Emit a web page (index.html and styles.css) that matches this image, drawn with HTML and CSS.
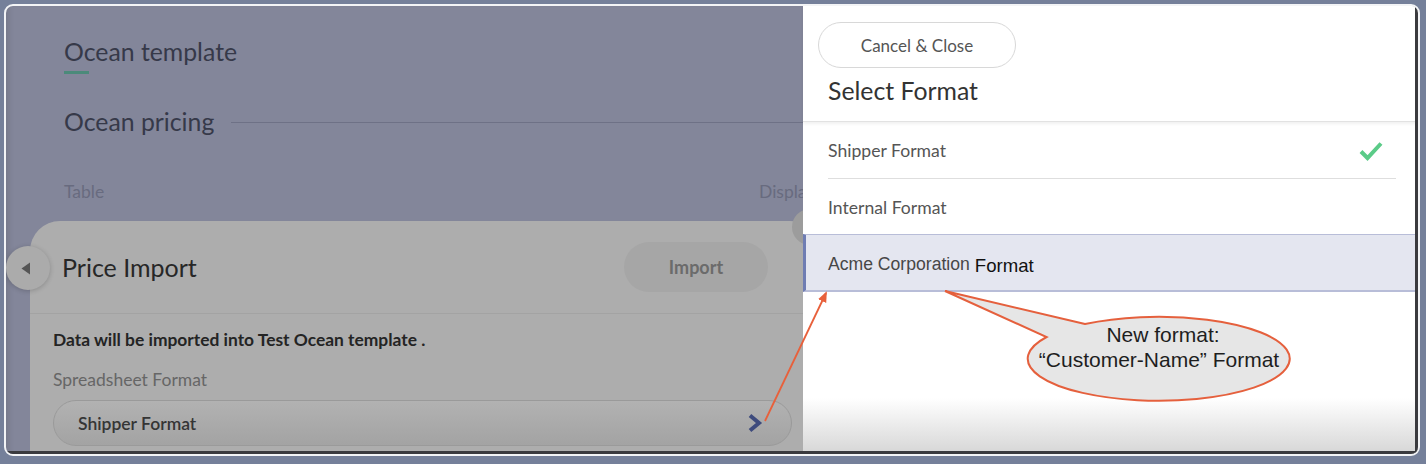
FILE: index.html
```html
<!DOCTYPE html>
<html lang="en">
<head>
    <meta charset="UTF-8">
    <meta name="viewport" content="width=device-width, initial-scale=1.0">
    <title>Price Import - Select Format</title>
    <link rel="stylesheet" href="styles.css">
</head>
<body>
    <div class="frame">
        <div class="screen">
            <section class="page">
                <div class="page-head">
                    <h1 class="template-title">Ocean template</h1>
                    <div class="title-underline"></div>
                    <div class="pricing-row">
                        <h2>Ocean pricing</h2>
                        <span class="rule"></span>
                    </div>
                    <div class="tabs-row">
                        <span>Table</span>
                        <span>Display</span>
                    </div>
                </div>

                <div class="card">
                    <button class="back-btn" aria-label="Back">
                        <svg width="10" height="13" viewBox="0 0 10 13"><path d="M9 0.5 L0.5 6.5 L9 12.5 Z" fill="#555"/></svg>
                    </button>
                    <span class="card-close"></span>
                    <div class="card-head">
                        <h3>Price Import</h3>
                        <button class="import-btn">Import</button>
                    </div>
                    <div class="card-body">
                        <p class="notice">Data will be imported into Test Ocean template .</p>
                        <label class="field-label">Spreadsheet Format</label>
                        <div class="select">
                            <span>Shipper Format</span>
                            <svg width="16" height="20" viewBox="0 0 16 20"><path d="M3 2.5 L12 10 L3 17.5" fill="none" stroke="#3e4b7d" stroke-width="4" stroke-linejoin="miter"/></svg>
                        </div>
                    </div>
                </div>
            </section>

            <aside class="drawer">
                <div class="drawer-head">
                    <button class="cancel-btn">Cancel &amp; Close</button>
                    <h2>Select Format</h2>
                </div>
                <ul class="format-list">
                    <li class="format-item">
                        <span>Shipper Format</span>
                        <svg class="check" width="24" height="20" viewBox="0 0 24 20"><path d="M2 10.5 L8.5 17 L22 2.5" fill="none" stroke="#5bcb88" stroke-width="4"/></svg>
                    </li>
                    <li class="format-item">Internal Format</li>
                    <li class="format-item selected">
                        <span class="acme">Acme Corporation</span><span class="acme-edit">Format</span>
                    </li>
                </ul>
            </aside>

            <svg class="annotation" width="1412" height="448" viewBox="0 0 1412 448">
                <defs>
                    <marker id="arrowhead" markerWidth="12" markerHeight="12" refX="9" refY="6" orient="auto" markerUnits="userSpaceOnUse">
                        <path d="M0 1.5 L11 6 L0 10.5 Z" fill="#e8603b"/>
                    </marker>
                </defs>
                <line x1="759" y1="415" x2="820" y2="287" stroke="#e8603b" stroke-width="1.8" marker-end="url(#arrowhead)"/>
                <path d="M1079 318 L939 285 L1040.6 331 A131 42 0 1 0 1079 318 Z" fill="#e6e6e6" stroke="#e5603d" stroke-width="2"/>
                <text class="callout-text" x="1157" y="336" text-anchor="middle">New format:</text>
                <text class="callout-text" x="1153" y="361" text-anchor="middle">“Customer-Name” Format</text>
            </svg>
        </div>
    </div>
</body>
</html>
```

FILE: styles.css
```css
* {
    box-sizing: border-box;
}
body {
    margin: 0;
    width: 1426px;
    height: 464px;
    overflow: hidden;
    background: #75809a;
    font-family: Lato, 'Open Sans', sans-serif;
}
.frame {
    position: relative;
    margin: 4px 6px 0 4px;
    height: 452px;
    border: 2px solid #f3f4f6;
    border-radius: 9px;
    overflow: hidden;
    background: #fff;
}
.frame::after {
    content: '';
    position: absolute;
    inset: 0;
    border-right: 3px solid #3a3a3e;
    border-bottom: 3px solid #3a3a3e;
    pointer-events: none;
    z-index: 10;
}
.screen {
    position: relative;
    height: 100%;
}

/* dimmed page behind the drawer */
.page {
    height: 100%;
    background: #83869a;
    box-shadow: inset 6px 0 6px -4px rgba(0, 0, 0, 0.12);
}
.page-head {
    padding: 31px 0 0 58px;
}
.template-title,
.pricing-row h2 {
    margin: 0;
    font-size: 24.8px;
    font-weight: 400;
    line-height: 30px;
    color: #363949;
}
.title-underline {
    width: 25px;
    height: 3px;
    margin-top: 4px;
    background: #4b8a7a;
}
.pricing-row {
    display: flex;
    align-items: center;
    margin-top: 33px;
}
.pricing-row .rule {
    flex: 1;
    height: 1px;
    margin-left: 17px;
    background: #6e7186;
}
.tabs-row {
    display: grid;
    grid-template-columns: 695px auto;
    margin-top: 45px;
    font-size: 17.5px;
    line-height: 20px;
    color: #686b7f;
}

.card {
    position: relative;
    width: 790px;
    height: 260px;
    margin: 19px 0 0 24px;
    background: #adadad;
    border-radius: 30px 30px 0 0;
}
.back-btn {
    position: absolute;
    left: -24px;
    top: 25px;
    width: 44px;
    height: 44px;
    padding: 0 4px 0 0;
    border: none;
    border-radius: 50%;
    background: #ababab;
    box-shadow: 0 1px 5px rgba(0, 0, 0, 0.2);
    display: flex;
    align-items: center;
    justify-content: center;
}
.card-close {
    position: absolute;
    left: 762px;
    top: -12px;
    width: 36px;
    height: 36px;
    border-radius: 50%;
    background: #9c9c9c;
}
.card-head {
    display: flex;
    align-items: center;
    justify-content: space-between;
    height: 93px;
    padding: 0 52px 0 32px;
    border-bottom: 1px solid #a3a3a3;
}
.card-head h3 {
    margin: 0;
    font-size: 25px;
    font-weight: 400;
    color: #272727;
}
.import-btn {
    width: 144px;
    height: 50px;
    border: none;
    border-radius: 25px;
    background: #a6a6a6;
    font-family: Lato, 'Open Sans', sans-serif;
    font-size: 18px;
    font-weight: 700;
    color: #6b6b6b;
}
.card-body {
    padding: 16px 28px 0 23px;
}
.notice {
    margin: 0;
    font-size: 17.4px;
    font-weight: 700;
    line-height: 20px;
    color: #242424;
}
.field-label {
    display: block;
    margin-top: 20px;
    font-size: 17.5px;
    line-height: 20px;
    color: #666;
}
.select {
    display: flex;
    align-items: center;
    justify-content: space-between;
    height: 46px;
    margin-top: 10px;
    padding: 0 28px 0 24px;
    border: 1px solid #9a9a9a;
    border-radius: 23px;
    background: linear-gradient(#b2b2b2, #a3a3a3);
    font-size: 17.5px;
    font-weight: 600;
    color: #353535;
}

/* format drawer */
.drawer {
    position: absolute;
    top: 0;
    right: 0;
    bottom: 0;
    width: 615px;
    background: linear-gradient(to bottom, #fff 0, #fff 392px, #d6d6d6 100%);
}
.drawer-head {
    position: relative;
    z-index: 1;
    height: 116px;
    padding: 16px 0 0 15px;
    border-bottom: 1px solid #e2e2e2;
    box-shadow: 0 2px 3px rgba(0, 0, 0, 0.06);
    background: #fff;
}
.cancel-btn {
    width: 198px;
    height: 46px;
    border: 1px solid #d8d8d8;
    border-radius: 23px;
    background: #fff;
    font-family: Lato, 'Open Sans', sans-serif;
    font-size: 17px;
    color: #555;
}
.drawer-head h2 {
    margin: 8px 0 0 10px;
    font-size: 24.8px;
    font-weight: 400;
    line-height: 30px;
    color: #333;
}
.format-list {
    margin: 0;
    padding: 0;
    list-style: none;
}
.format-item {
    display: flex;
    align-items: center;
    justify-content: space-between;
    height: 55px;
    margin: 0 22px 0 25px;
    padding-top: 1px;
    font-size: 17.6px;
    color: #555;
}
.format-item:first-child {
    height: 57px;
    border-bottom: 1px solid #dedede;
}
.format-item .check {
    margin-right: 13px;
}
.format-item.selected {
    justify-content: flex-start;
    height: 58px;
    margin: 0;
    padding: 3px 0 0 22px;
    background: #e4e6f0;
    border-left: 3px solid #6f7db3;
    border-top: 1px solid #b8bdd8;
    border-bottom: 2px solid #b8bdd8;
}
.acme {
    font-family: 'Liberation Sans', Arial, sans-serif;
    font-size: 17.6px;
    color: #474747;
}
.acme-edit {
    margin: 3px 0 0 5px;
    font-family: 'Liberation Sans', Arial, sans-serif;
    font-size: 18.6px;
    color: #111;
}

/* annotation overlay */
.annotation {
    position: absolute;
    top: 0;
    left: 0;
    z-index: 5;
    pointer-events: none;
}
.callout-text {
    font-family: 'Liberation Sans', Arial, sans-serif;
    font-size: 21px;
    fill: #1e1e1e;
}
```
